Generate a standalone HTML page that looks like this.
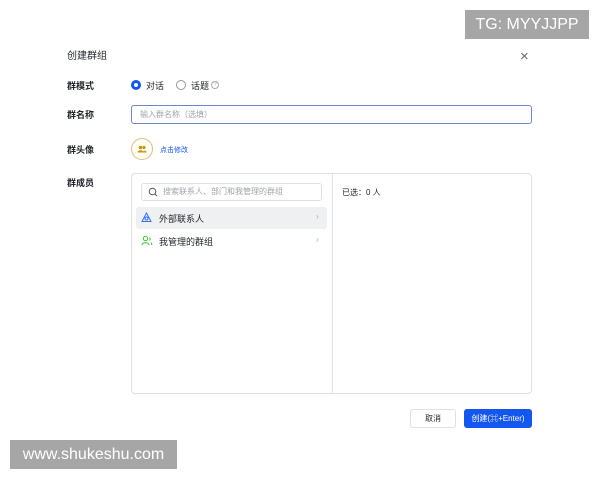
<!DOCTYPE html>
<html><head><meta charset="utf-8"><style>
*{margin:0;padding:0;box-sizing:border-box}
body{width:600px;height:480px;background:#fff;position:relative;overflow:hidden;font-family:"Liberation Sans","Noto Sans CJK SC",sans-serif;color:#1f2329}
.a{position:absolute}
.lbl{font-size:9px;font-weight:bold;color:#1f2329;left:67px}
</style></head><body>
<div class="a" style="left:465px;top:10px;width:124px;height:29px;background:#a6a6a6;color:#fff;font-size:16px;line-height:29px;text-align:center">TG: MYYJJPP</div>
<div class="a" style="left:520px;top:49px;font-size:15px;color:#646a73;line-height:15px">×</div>
<div class="a" style="left:67px;top:51px;font-size:10px;line-height:12px">创建群组</div>
<div class="a lbl" style="top:79px">群模式</div>
<div class="a" style="left:131px;top:80px;width:10px;height:10px;border-radius:50%;border:3px solid #1456f0;background:#fff"></div>
<div class="a" style="left:146px;top:79px;font-size:9px">对话</div>
<div class="a" style="left:176px;top:80px;width:10px;height:10px;border-radius:50%;border:1px solid #999"></div>
<div class="a" style="left:191px;top:79px;font-size:9px">话题</div>
<div class="a" style="left:211px;top:81px;width:8px;height:8px;border-radius:50%;border:1px solid #aaa;font-size:6px;line-height:7px;text-align:center;color:#aaa">?</div>
<div class="a lbl" style="top:108px">群名称</div>
<div class="a" style="left:131px;top:105px;width:401px;height:19px;border:1px solid #6d88c8;border-radius:3px;font-size:8px;color:#a0a4aa;line-height:17px;padding-left:8px">输入群名称（选填）</div>
<div class="a lbl" style="top:143px">群头像</div>
<div class="a" style="left:131px;top:138px;width:22px;height:22px;border-radius:50%;border:1px solid #d9c07a;background:#fffdf5"></div>
<svg class="a" style="left:137px;top:144px" width="10" height="10"><circle cx="3.5" cy="3.5" r="1.8" fill="#c9960c"/><circle cx="7" cy="3.5" r="1.6" fill="#c9960c"/><path d="M0.5 8.5C0.5 5.5 6.5 5.5 6.5 8.5ZM6 8.5C6 6 9.5 6 9.5 8.5Z" fill="#c9960c"/></svg>
<div class="a" style="left:160px;top:145px;font-size:7px;color:#1456f0">点击修改</div>
<div class="a lbl" style="top:176px">群成员</div>
<div class="a" style="left:131px;top:173px;width:401px;height:221px;border:1px solid #dee0e3;border-radius:4px"></div>
<div class="a" style="left:332px;top:174px;width:1px;height:219px;background:#dee0e3"></div>
<div class="a" style="left:141px;top:183px;width:181px;height:18px;border:1px solid #dee0e3;border-radius:3px;font-size:8px;color:#a0a4aa;line-height:16px;padding-left:21px">搜索联系人、部门和我管理的群组</div>
<svg class="a" style="left:148px;top:187px" width="10" height="10"><circle cx="4.5" cy="4.5" r="3.3" fill="none" stroke="#555" stroke-width="1"/><path d="M7 7L9 9" stroke="#555"/></svg>
<div class="a" style="left:136px;top:207px;width:191px;height:22px;background:#eff0f1;border-radius:3px"></div>
<svg class="a" style="left:141px;top:212px" width="11" height="11"><path d="M5.5 1L10 9.5H1Z" fill="none" stroke="#3370ff" stroke-width="1"/><circle cx="5.5" cy="6.5" r="1.5" fill="none" stroke="#3370ff"/></svg>
<div class="a" style="left:159px;top:212px;font-size:9px">外部联系人</div>
<div class="a" style="left:316px;top:212px;font-size:8px;color:#aaa">›</div>
<svg class="a" style="left:141px;top:235px" width="12" height="11"><circle cx="4.5" cy="3.5" r="2.2" fill="none" stroke="#34c724"/><path d="M1 10C1 7 8 7 8 10" fill="none" stroke="#34c724"/><path d="M8.5 2.5A2 2 0 0 1 8.5 5.5M10 7.5L11 10" fill="none" stroke="#34c724"/></svg>
<div class="a" style="left:159px;top:235px;font-size:9px">我管理的群组</div>
<div class="a" style="left:316px;top:235px;font-size:8px;color:#aaa">›</div>
<div class="a" style="left:342px;top:187px;font-size:8px">已选：0 人</div>
<div class="a" style="left:410px;top:409px;width:46px;height:19px;border:1px solid #dee0e3;border-radius:3px;font-size:8px;line-height:17px;text-align:center">取消</div>
<div class="a" style="left:464px;top:409px;width:68px;height:19px;background:#1456f0;border-radius:3px;font-size:8px;line-height:19px;text-align:center;color:#fff">创建(⌘+Enter)</div>
<div class="a" style="left:10px;top:440px;width:167px;height:29px;background:#a6a6a6;color:#fff;font-size:16px;line-height:29px;text-align:center">www.shukeshu.com</div>
</body></html>
